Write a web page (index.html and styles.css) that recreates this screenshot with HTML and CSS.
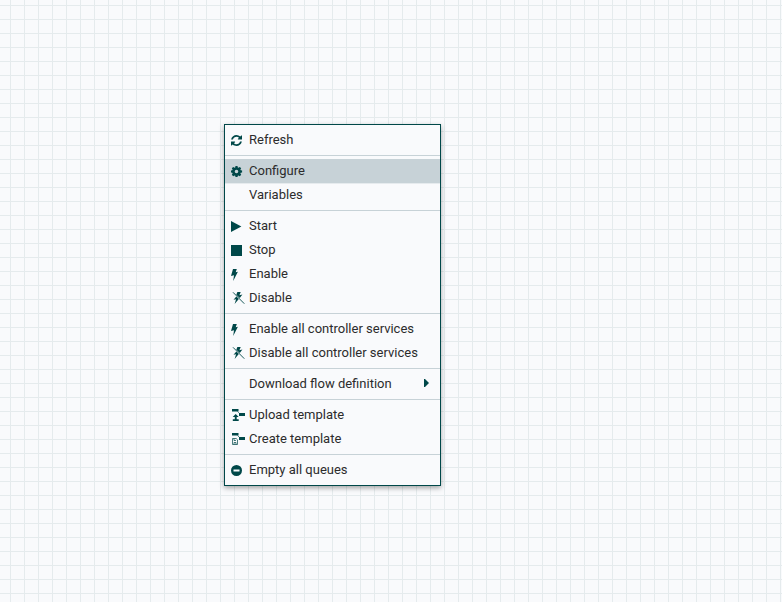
FILE: index.html
```html
<!DOCTYPE html>
<html lang="en">
<head>
<meta charset="utf-8">
<title>Flow canvas</title>
<link rel="stylesheet" href="styles.css">
</head>
<body>
<svg width="0" height="0" class="defs">
  <defs>
    <symbol id="bolt" viewBox="0 0 14 14"><path d="M3 2h3.800L5.700 5.200l2.200-.5L3.200 14l.8-5.800-3 .9z"/></symbol>
    <symbol id="bolt-off" viewBox="0 0 15 14"><path d="M7.400 1h3.300L9.400 4.200l3-.6-2.600 3.400L6.300 3.800zM6.300 5.600l2.500 2.500L4.600 13l1.500-4.700-2.600.5z"/><path d="M3 1.300l11.300 11.400" fill="none" stroke="currentColor" stroke-width=".9"/></symbol>
    <symbol id="refresh" viewBox="0 0 1536 1536"><path d="M1511 928q0 5-1 7-64 268-268 434.500T764 1536q-146 0-282.500-55T238 1324l-129 129q-19 19-45 19t-45-19-19-45V960q0-26 19-45t45-19h448q26 0 45 19t19 45-19 45l-137 137q71 66 161 102t187 36q134 0 250-65t186-179q11-17 53-117 8-23 30-23h192q13 0 22.500 9.500t9.500 22.500zm25-800v448q0 26-19 45t-45 19h-448q-26 0-45-19t-19-45 19-45l138-138Q969 256 768 256q-134 0-250 65T332 500q-11 17-53 117-8 23-30 23H50q-13 0-22.500-9.500T18 608v-7q65-268 270-434.500T768 0q146 0 284 55.500T1297 212l130-129q19-19 45-19t45 19 19 45z"/></symbol>
  </defs>
</svg>
<ul class="menu">
  <li class="item"><svg class="icon" viewBox="0 0 14 14"><use href="#refresh" x="1" y="2" width="11" height="11"/></svg><span>Refresh</span></li>
  <li class="divider"></li>
  <li class="item active"><svg class="icon" viewBox="0 0 14 14"><path fill-rule="evenodd" d="M5.500 2h2l.3 1.400.7.300 1.300-.8 1.400 1.400-.8 1.300.3.7 1.400.3v1.900l-1.400.3-.3.7.8 1.300-1.400 1.400-1.300-.8-.7.3-.3 1.400h-2l-.3-1.400-.7-.3-1.300.8-1.400-1.400.8-1.300-.3-.7L1 8.500V6.600l1.300-.3.3-.7-.8-1.300 1.400-1.400 1.300.8.7-.3zM6.500 5.700a1.800 1.800 0 1 0 0 3.600 1.800 1.800 0 0 0 0-3.600z"/></svg><span>Configure</span></li>
  <li class="item"><span class="icon"></span><span>Variables</span></li>
  <li class="divider"></li>
  <li class="item"><svg class="icon" viewBox="0 0 14 14"><path d="M1 2l10.400 5.500L1 13z"/></svg><span>Start</span></li>
  <li class="item"><svg class="icon" viewBox="0 0 14 14"><path d="M1 2h11v11H1z"/></svg><span>Stop</span></li>
  <li class="item"><svg class="icon"><use href="#bolt"/></svg><span>Enable</span></li>
  <li class="item"><svg class="icon wide"><use href="#bolt-off"/></svg><span>Disable</span></li>
  <li class="divider"></li>
  <li class="item"><svg class="icon"><use href="#bolt"/></svg><span>Enable all controller services</span></li>
  <li class="item"><svg class="icon wide"><use href="#bolt-off"/></svg><span>Disable all controller services</span></li>
  <li class="divider"></li>
  <li class="item"><span class="icon"></span><span>Download flow definition</span><svg class="caret" viewBox="0 0 5 8"><path d="M0 0h1l4 4-4 4H0z"/></svg></li>
  <li class="divider"></li>
  <li class="item"><svg class="icon wide" viewBox="0 0 15 14"><path d="M2 1h6.500v2.500H2zM9 5h6v3H9zM5.700 6l3 3H6.700v2.300h2V13H2.800v-1.700h2V9H2.700z"/><path d="M7.500 3.500l1.800 1.700" fill="none" stroke="currentColor" stroke-width=".6"/></svg><span>Upload template</span></li>
  <li class="item"><svg class="icon wide" viewBox="0 0 15 14"><path d="M2 1h6.500v2.500H2zM9 5h6v3H9z"/><path d="M7.500 3.500l1.800 1.700M2.500 6.500h3.700l1.300 1.300v4.700h-5zM4 6.500v2h2M4 12.500v-2h2v2" fill="none" stroke="currentColor" stroke-width=".7"/></svg><span>Create template</span></li>
  <li class="divider"></li>
  <li class="item"><svg class="icon" viewBox="0 0 14 14"><path fill-rule="evenodd" d="M6.500 2a5.500 5.500 0 1 0 0 11 5.500 5.500 0 0 0 0-11zM3.500 6.600h6v1.800h-6z"/></svg><span>Empty all queues</span></li>
</ul>
</body>
</html>
```
FILE: styles.css
```css
* {
  box-sizing: border-box;
}

body {
  margin: 0;
  height: 602px;
  padding: 124px 0 0 224px;
  overflow: hidden;
  background-color: #f9fafc;
  background-image:
    linear-gradient(to right, #e5ebed 1px, transparent 1px),
    linear-gradient(to bottom, #e5ebed 1px, transparent 1px);
  background-size: 14px 14px;
  background-position: 10px 5px;
  font: 13px/24px Roboto, "Liberation Sans", sans-serif;
  color: #2c2c2c;
}

.defs {
  display: block;
}

.menu {
  width: 217px;
  margin: 0;
  padding: 3px 0;
  list-style: none;
  background: #f9fafc;
  border: 1px solid #004849;
  box-shadow: 0 2px 5px rgba(0, 0, 0, 0.35);
}

.item {
  display: flex;
  align-items: center;
  height: 24px;
  padding: 0 11px 0 5px;
  white-space: nowrap;
}

.active {
  background: #c7d2d7;
  box-shadow: 0 1px 0 #e6ebee;
}

.divider {
  height: 1px;
  margin: 3px 0;
  background: #c7d2d7;
}

.icon {
  flex: none;
  width: 14px;
  height: 14px;
  margin-right: 5px;
  color: #004849;
  fill: #004849;
}

.wide {
  width: 15px;
  margin-right: 4px;
}

.caret {
  width: 5px;
  height: 8px;
  margin: 0 0 2px auto;
  fill: #004849;
}
```
